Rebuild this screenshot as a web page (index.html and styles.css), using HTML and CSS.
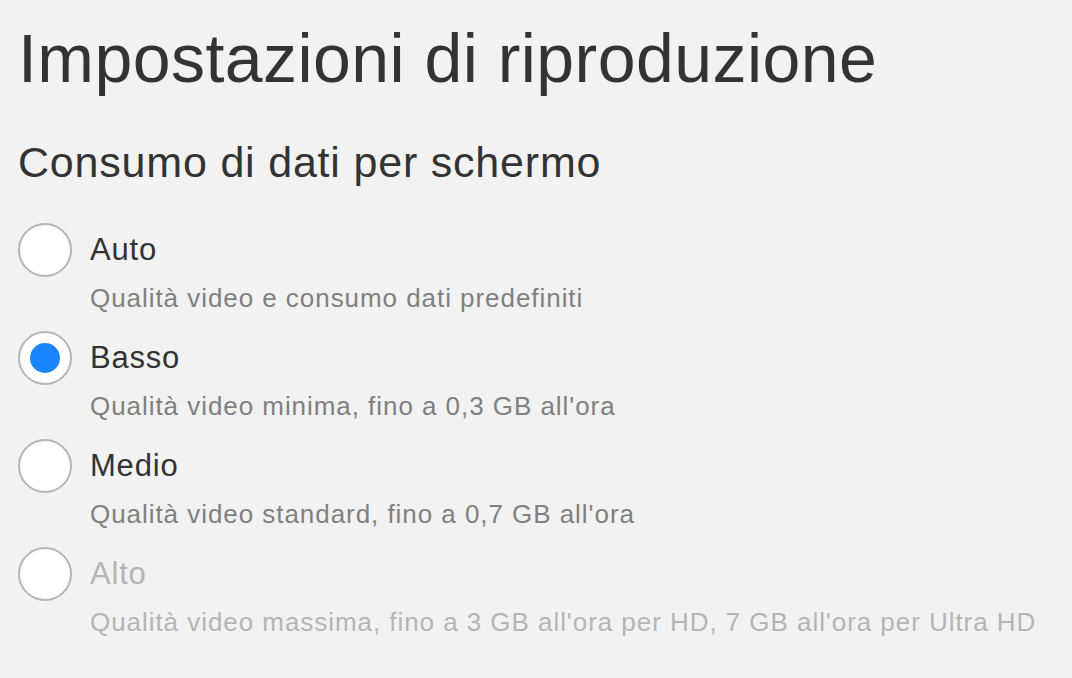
FILE: index.html
```html
<!DOCTYPE html>
<html lang="it">
<head>
  <meta charset="UTF-8" />
  <title>Impostazioni di riproduzione</title>
  <link rel="stylesheet" href="styles.css">
</head>
<body>
  <div class="settings">
    <h1>Impostazioni di riproduzione</h1>
    <h2>Consumo di dati per schermo</h2>

    <!-- Opzioni qualità -->
    <div class="options">
      <label class="option">
        <span class="radio"></span>
        <span class="text">
          <span class="name">Auto</span>
          <span class="desc">Qualità video e consumo dati predefiniti</span>
        </span>
      </label>
      <label class="option">
        <span class="radio checked"></span>
        <span class="text">
          <span class="name">Basso</span>
          <span class="desc">Qualità video minima, fino a 0,3 GB all'ora</span>
        </span>
      </label>
      <label class="option">
        <span class="radio"></span>
        <span class="text">
          <span class="name">Medio</span>
          <span class="desc">Qualità video standard, fino a 0,7 GB all'ora</span>
        </span>
      </label>
      <label class="option disabled">
        <span class="radio"></span>
        <span class="text">
          <span class="name">Alto</span>
          <span class="desc">Qualità video massima, fino a 3 GB all'ora per HD, 7 GB all'ora per Ultra HD</span>
        </span>
      </label>
    </div>
  </div>
</body>
</html>
```

FILE: styles.css
```css
body {
  margin: 0;
  background: #f2f2f2;
  color: #333;
  font-family: "Liberation Sans", Arial, sans-serif;
}

.settings {
  padding: 17.5px 18px 0 18px;
}

h1 {
  margin: 0;
  font-size: 68px;
  font-weight: normal;
  line-height: 80px;
  letter-spacing: 0.45px;
}

h2 {
  margin: 39px 0 0 0;
  font-size: 43px;
  font-weight: normal;
  line-height: 50px;
  letter-spacing: 0.8px;
}

.options {
  margin-top: 36px;
}

.option {
  display: flex;
  align-items: flex-start;
  margin-bottom: 11px;
}

.radio {
  box-sizing: border-box;
  width: 54px;
  height: 54px;
  border: 2px solid #b5b5b5;
  border-radius: 50%;
  background: white;
  display: flex;
  align-items: center;
  justify-content: center;
  flex-shrink: 0;
}

.radio.checked::after {
  content: "";
  width: 30px;
  height: 30px;
  border-radius: 50%;
  background: #1a85ff;
}

.text {
  display: flex;
  flex-direction: column;
  margin-left: 18px;
}

.name {
  font-size: 31px;
  line-height: 54px;
  letter-spacing: 0.8px;
}

.desc {
  font-size: 26px;
  line-height: 43px;
  letter-spacing: 0.95px;
  color: #808080;
}

.disabled .name,
.disabled .desc {
  color: #b5b5b5;
}
```
